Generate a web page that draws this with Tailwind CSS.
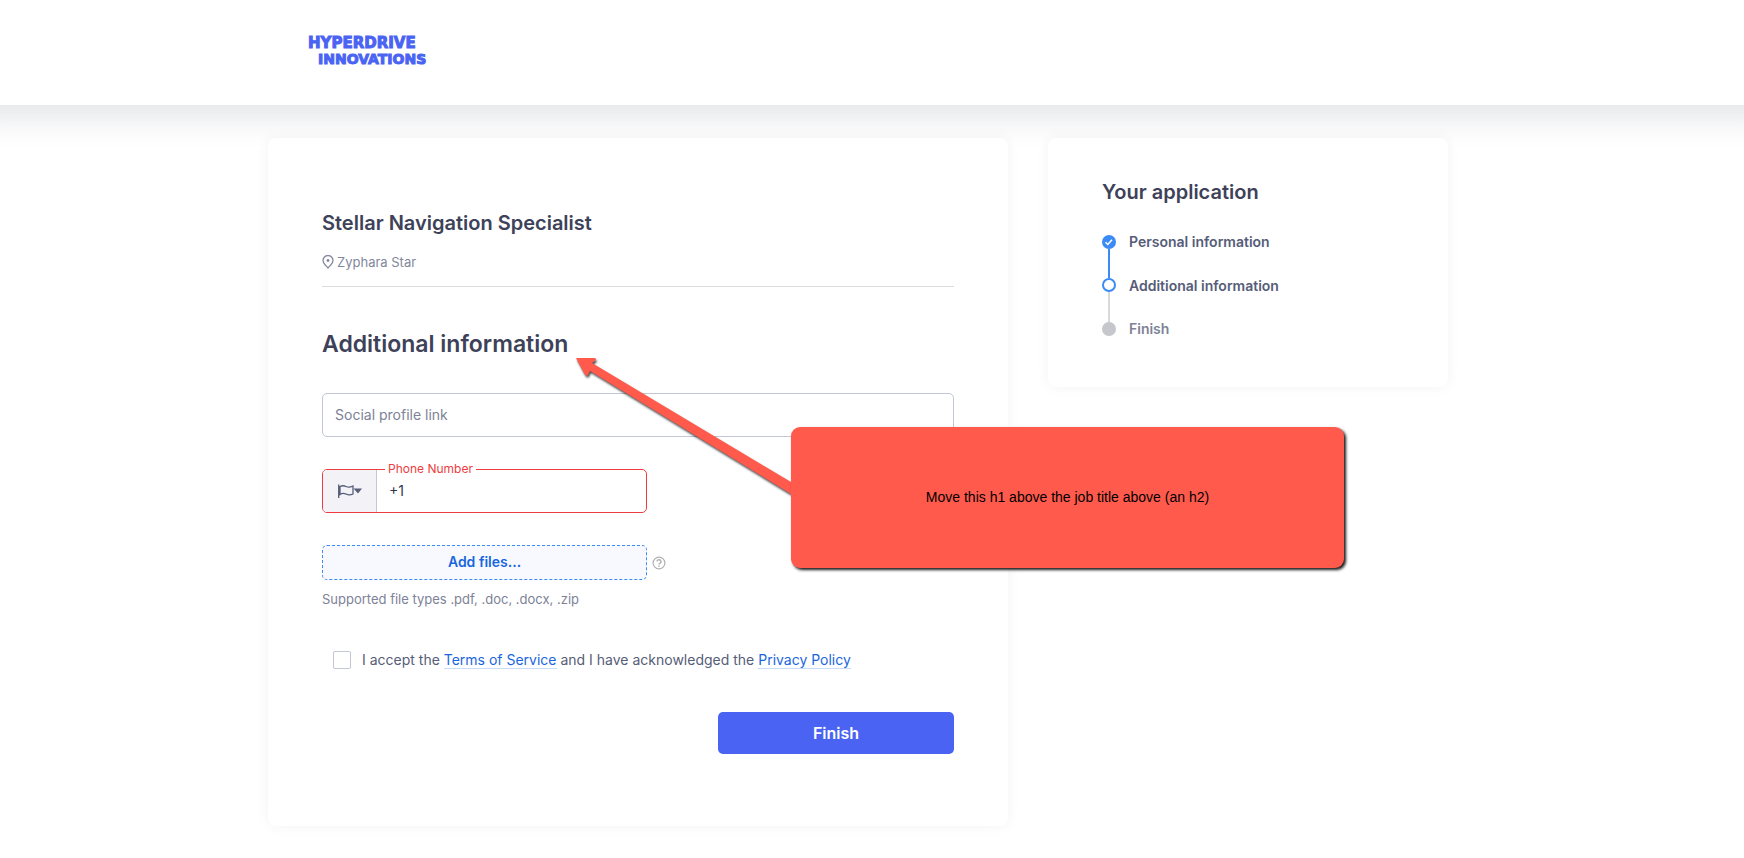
<!DOCTYPE html>
<html lang="en">
<head>
<meta charset="utf-8">
<title>Stellar Navigation Specialist - Additional information</title>
<script src="https://cdn.jsdelivr.net/npm/@tailwindcss/browser@4"></script>
</head>
<body class="min-h-screen overflow-x-hidden bg-white font-['Inter',sans-serif] text-sm text-[#565d78]">
  <header class="bg-white pr-7 shadow-[0_-20px_30px_32px_#14233c1f]">
    <div class="mx-auto flex h-[105px] max-w-[1180px] px-10 pt-[35px]">
      <a href="#" class="flex h-8 flex-col font-['DejaVu_Sans',sans-serif] text-sm leading-4 font-bold text-[#4a63f3] [-webkit-text-stroke:1px_#4a63f3]">
        <span class="text-[15px]">HYPERDRIVE</span>
        <span class="pl-[10px]">INNOVATIONS</span>
      </a>
    </div>
  </header>

  <main class="relative pt-[33px] pr-7 pb-8">
    <div class="relative mx-auto flex max-w-[1180px] items-start gap-10">
      <section class="min-w-0 flex-1 rounded-lg bg-white px-[54px] pt-[69px] pb-[72px] shadow-[0_0_14px_#0000000d]">
        <h2 class="text-xl leading-8 font-semibold text-[#3d4259]">Stellar Navigation Specialist</h2>
        <p class="mt-[13px] flex items-center gap-[3px] border-b border-[#dcdcdf] pb-[14px] text-[13px] leading-5 text-[#82879c]">
          <svg class="h-[14px] w-3" viewBox="0 0 12 14" fill="none" stroke="currentColor" stroke-width="1.3" aria-hidden="true"><path d="M6 13C4.500 11.200 1 8.300 1 5.500a5 5 0 0 1 10 0C11 8.300 7.500 11.200 6 13Z"/><circle cx="6" cy="5.500" r=".8" fill="currentColor"/></svg>
          Zyphara Star
        </p>
        <h1 class="mt-[41px] text-[23px] leading-8 font-semibold text-[#3d4259]">Additional information</h1>

        <form class="mt-[33px] flex flex-col">
          <input type="text" aria-label="Social profile link" placeholder="Social profile link" class="h-11 w-full rounded-[5px] border border-[#c3c6d6] bg-white px-3 pb-px text-sm placeholder:text-[#7d8297]">

          <div class="relative mt-8 flex h-11 w-[325px] max-w-full rounded-[5px] border border-[#ee3d41]">
            <button type="button" aria-label="Select country" class="flex w-[54px] items-center justify-center rounded-l border-r border-[#c3c6d6] bg-[#f3f3f7]">
              <svg class="h-4 w-6" viewBox="0 0 24 16" fill="none" stroke="#565d78" stroke-width="1.3" aria-hidden="true"><path d="M.7 1.500V15M2 3.500C5 2 6 2.500 8 3.500S12 4.500 15 3V11C12 12.500 10 12 8 11S4 10 2 11.500Z"/><path d="M15.500 5.500H24l-4 5z" fill="#565d78" stroke="none"/></svg>
            </button>
            <input id="phone" type="tel" value="+1" class="min-w-0 flex-1 bg-transparent px-3 text-sm text-[#33384c] outline-none">
            <label for="phone" class="absolute -top-[9px] left-[62px] bg-white px-[3px] text-xs leading-4 text-[#ee3d41]">Phone Number</label>
          </div>

          <div class="mt-8 flex items-center gap-[5px]">
            <button type="button" class="h-[35px] w-[325px] rounded-[5px] border border-dashed border-[#3b8af5] bg-[#f7f9fe] pb-px text-sm font-semibold text-[#1a66dd]">Add files...</button>
            <button type="button" aria-label="Help">
              <svg class="size-[14px]" viewBox="0 0 14 14" fill="none" stroke="#b0b0b3" stroke-width="1.2" aria-hidden="true"><circle cx="7" cy="7" r="5.900"/><path d="M5 5.600a2 1.800 0 1 1 2.800 1.700Q7 7.700 7 8.500M7 9.500v1.200" stroke-width="1.500"/></svg>
            </button>
          </div>
          <p class="mt-[9px] text-[13px] leading-5 text-[#7d8297]">Supported file types .pdf, .doc, .docx, .zip</p>

          <div class="mt-[41px] flex items-center gap-[11px] pl-[11px]">
            <input id="terms" type="checkbox" class="size-[18px] shrink-0 appearance-none rounded-[2px] border border-[#c3c6d6] bg-white">
            <label for="terms" class="leading-5">I accept the <a href="#" class="border-b border-[#c9dcf8] text-[#1a66dd]">Terms of Service</a> and I have acknowledged the <a href="#" class="border-b border-[#c9dcf8] text-[#1a66dd]">Privacy Policy</a></label>
          </div>

          <button type="submit" class="mt-[42px] h-[42px] w-[236px] self-end rounded-[5px] bg-[#4a63f3] text-base font-semibold text-white">Finish</button>
        </form>
      </section>

      <aside class="w-[400px] shrink-0 rounded-lg bg-white px-[54px] pt-[38px] pb-[51px] shadow-[0_0_14px_#0000000d]">
        <h2 class="text-xl leading-8 font-semibold text-[#3d4259]">Your application</h2>
        <ol class="mt-[27px] font-semibold">
          <li class="flex gap-[13px] leading-[14px]">
            <span class="flex flex-col items-center">
              <svg class="size-[14px]" viewBox="0 0 14 14" fill="none" aria-hidden="true"><circle cx="7" cy="7" r="7" fill="#3b8af5"/><path d="M3.500 7.200 5.800 9.500 10 4.800" stroke="#fff" stroke-width="1.500"/></svg>
              <span class="h-[29px] w-[2px] bg-[#3b8af5]"></span>
            </span>
            Personal information
          </li>
          <li class="flex gap-[13px] leading-4" aria-current="step">
            <span class="flex flex-col items-center">
              <span class="size-[14px] rounded-full border-2 border-[#3b8af5]"></span>
              <span class="h-[30px] w-[2px] bg-[#d9d9dc]"></span>
            </span>
            Additional information
          </li>
          <li class="flex gap-[13px] leading-[14px] text-[#7d8297]">
            <span class="size-[14px] rounded-full bg-[#c6c7cc]"></span>
            Finish
          </li>
        </ol>
      </aside>

      <!-- Review note with its arrow, laid over the form -->
      <svg class="absolute top-[215px] left-[303px] h-[150px] w-[230px] drop-shadow-[1px_2px_1px_#000000b3]" viewBox="0 0 230 150" fill="#ff5a4c" aria-hidden="true"><path d="M5 5H24Q27 6 21 10L220 129V141L19 18 17 22Q15 24 13 20Z"/></svg>
      <div role="note" class="absolute top-[289px] left-[523px] flex h-[141px] w-[553px] items-center justify-center rounded-[9px] bg-[#ff5a4c] pb-[2px] font-['Liberation_Sans',sans-serif] text-sm text-black shadow-[2px_2px_3px_#000000e6]">Move this h1 above the job title above (an h2)</div>
    </div>
  </main>
</body>
</html>
